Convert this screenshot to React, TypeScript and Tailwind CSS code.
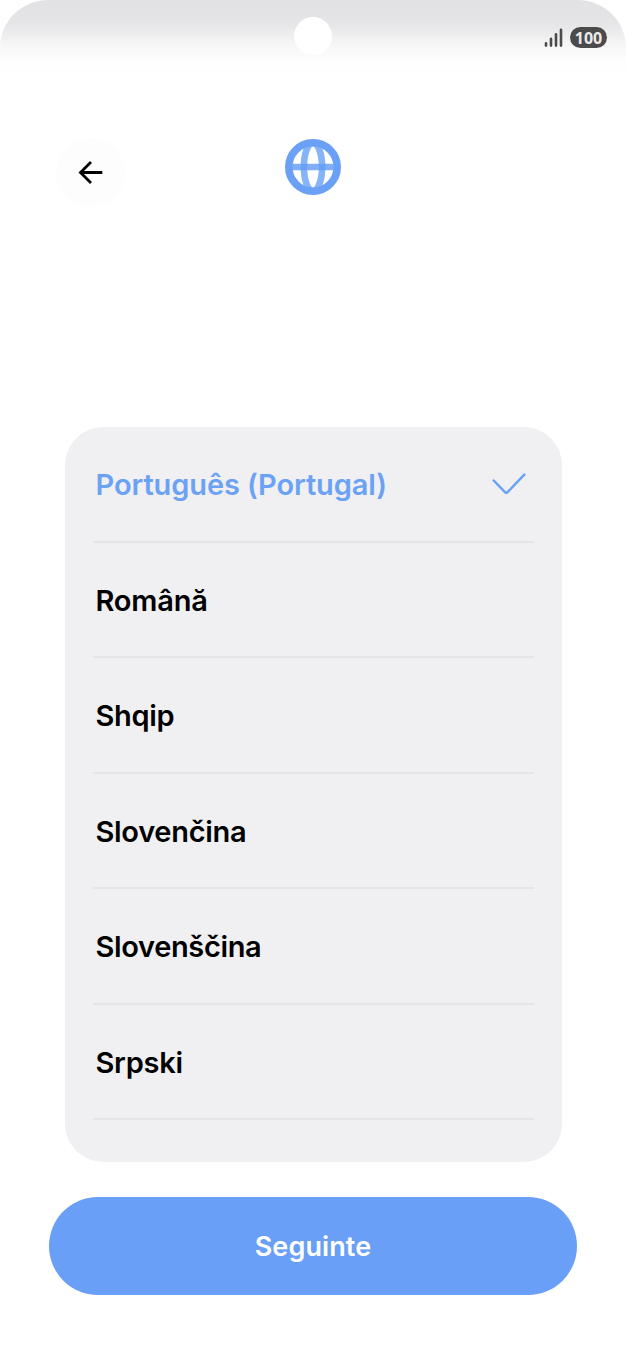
import React from "react";

const languages = [
  { name: "Português (Portugal)", tracking: "tracking-[-0.1px]", selected: true },
  { name: "Română", tracking: "tracking-[-0.2px]" },
  { name: "Shqip", tracking: "tracking-[-0.3px]" },
  { name: "Slovenčina", tracking: "tracking-[-0.3px]" },
  { name: "Slovenščina", tracking: "tracking-[-0.35px]" },
  { name: "Srpski", tracking: "tracking-[-0.25px]" },
];

function SignalIcon() {
  return (
    <svg width="20" height="22" viewBox="0 0 20 22" stroke="#4b4b4b" strokeWidth="2.6" strokeLinecap="round">
      <path d="M2 16.2v2.4M7 11.8v6.8M12 7.3v11.3M17 2.7v15.9" />
    </svg>
  );
}

function GlobeIcon() {
  return (
    <svg width="56" height="56" viewBox="0 0 56 56" fill="none">
      <ellipse cx="28" cy="28" rx="9.1" ry="24" stroke="#86b4f8" strokeWidth="6.6" />
      <path d="M6 28h44" stroke="#80aff8" strokeWidth="6.6" />
      <path d="M15.6 28h6.6M33.8 28h6.6" stroke="#6aa1f6" strokeWidth="6.6" />
      <circle cx="28" cy="28" r="24.2" stroke="#6aa1f6" strokeWidth="7.6" />
    </svg>
  );
}

function StatusBar() {
  return (
    <div className="h-[74px] rounded-t-[48px] bg-[linear-gradient(to_bottom,#e2e2e4_0px,#e4e4e6_18px,#e8e8ea_28px,#efeff0_36px,#f5f5f5_43px,#fafafa_52px,#fdfdfd_60px,#ffffff_74px)] grid grid-cols-3">
      <div />
      {/* Camera */}
      <div className="flex justify-center pt-[17px]">
        <div className="w-[38px] h-[38px] rounded-full bg-white" />
      </div>
      <div className="flex justify-end items-start pt-[27px] pr-[19px] gap-[6px]">
        <SignalIcon />
        <span className="w-[37px] h-[21px] rounded-full bg-[#4b4b4b] text-[#ececec] text-[16px] font-bold flex items-center justify-center font-['Open_Sans',sans-serif]">
          100
        </span>
      </div>
    </div>
  );
}

export default function App() {
  return (
    <div className="w-[626px] h-[1358px] bg-white overflow-hidden flex flex-col font-['Inter',sans-serif]">
      <StatusBar />

      {/* Header */}
      <div className="grid grid-cols-3 h-[353px] pt-[64px]">
        <div className="pl-[56px]">
          <button className="w-[69px] h-[69px] rounded-full bg-[#fdfdfd] flex items-center justify-center">
            <svg width="26" height="26" viewBox="0 0 26 26" fill="none" stroke="#000" strokeWidth="2.8">
              <path d="M24.3 12.5H3M13 2L2.5 12.5L13 23" />
            </svg>
          </button>
        </div>
        <div className="flex justify-center items-start pt-px">
          <GlobeIcon />
        </div>
      </div>

      {/* Language list */}
      <div className="mx-[64.5px] h-[735px] rounded-[38px] bg-[#f0f0f2] px-[28px] overflow-hidden shrink-0">
        {languages.map((lang) => (
          <div
            key={lang.name}
            className={`h-[115.5px] border-b-2 border-[#e4e5e7] pl-[3px] pr-[8px] pt-[2px] flex items-center justify-between text-[29px] font-semibold ${
              lang.selected ? "text-[#6ca2f3]" : "text-black"
            }`}
          >
            <span className={`whitespace-nowrap ${lang.tracking}`}>{lang.name}</span>
            {lang.selected && (
              <svg className="mb-[2px]" width="34" height="22" viewBox="0 0 34 22" fill="none" stroke="#6ca2f3" strokeWidth="2.5" strokeLinecap="round" strokeLinejoin="round">
                <path d="M1.7 7.5L13 19.2Q14.3 20.5 15.6 19.2L32.3 1.7" />
              </svg>
            )}
          </div>
        ))}
      </div>

      <button className="mt-[35px] ml-[49px] pt-[2px] w-[528px] h-[98px] rounded-full bg-[#699ff6] text-white text-[27px] font-semibold shrink-0 tracking-[0.1px]">
        Seguinte
      </button>
    </div>
  );
}
